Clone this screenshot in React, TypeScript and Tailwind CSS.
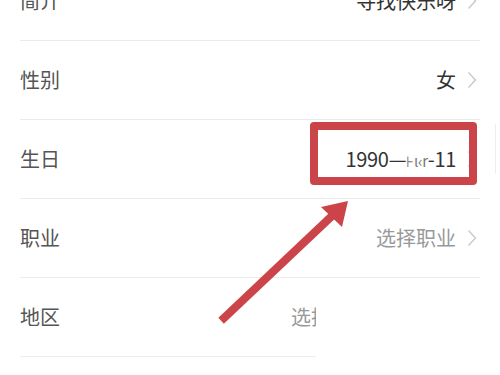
import type { ReactNode } from 'react'

const font = { fontFamily: "'Noto Sans CJK SC', 'Noto Sans', sans-serif" }

function Chevron() {
  return (
    <svg width="10" height="18" viewBox="0 0 10 18" className="flex-shrink-0">
      <path d="M1.5 1.5 L8.5 9 L1.5 16.5" stroke="#c9c9c9" strokeWidth="1.4" fill="none" />
    </svg>
  )
}

function Row({ label, children }: { label: string; children?: ReactNode }) {
  return (
    <div className="flex items-center h-[79px] border-b border-[#ebebeb]">
      <span className="text-[20px] text-[#555]">{label}</span>
      {children}
    </div>
  )
}

export default function App() {
  return (
    <div className="relative w-[500px] h-[375px] overflow-hidden bg-white" style={font}>
      <div className="px-[20px] mt-[-38px]">
        <Row label="简介">
          <div className="ml-auto flex items-center gap-[11px] pr-[3px]">
            <span className="text-[20px] text-[#333]">寻找快乐呀</span>
            <Chevron />
          </div>
        </Row>
        <Row label="性别">
          <div className="ml-auto flex items-center gap-[11px] pr-[3px]">
            <span className="text-[20px] text-[#333]">女</span>
            <Chevron />
          </div>
        </Row>
        <Row label="生日">
          <div className="ml-auto flex items-center gap-[11px] pr-[3px]">
            <span className="text-[20px] text-[#333] tracking-[-0.3px]">
              1990—<span className="text-[15px] text-[#777]">⊦ι‹r</span>-11
            </span>
            <Chevron />
          </div>
        </Row>
        <Row label="职业">
          <div className="ml-auto flex items-center gap-[11px] pr-[3px]">
            <span className="text-[20px] text-[#999]">选择职业</span>
            <Chevron />
          </div>
        </Row>
        <Row label="地区">
          <span className="ml-[231px] text-[20px] text-[#999]">选择地区</span>
        </Row>
      </div>

      {/* white patch over the lower right */}
      <div className="absolute left-[316px] top-[282px] right-0 bottom-0 bg-white" />

      {/* faint edge line */}
      <div className="absolute left-[495px] top-[124px] w-px h-[50px] bg-[#eeeeee]" />

      {/* red highlight box */}
      <div className="absolute left-[310px] top-[122px] w-[167px] h-[63px] border-[8px] border-[#cb4449] rounded-[4px]" />

      {/* arrow */}
      <svg className="absolute inset-0" width="500" height="375">
        <line x1="224" y1="318" x2="334" y2="214" stroke="#cb4449" strokeWidth="8" strokeLinecap="square" />
        <polygon points="348,201 342,227 321,207" fill="#cb4449" />
      </svg>
    </div>
  )
}
